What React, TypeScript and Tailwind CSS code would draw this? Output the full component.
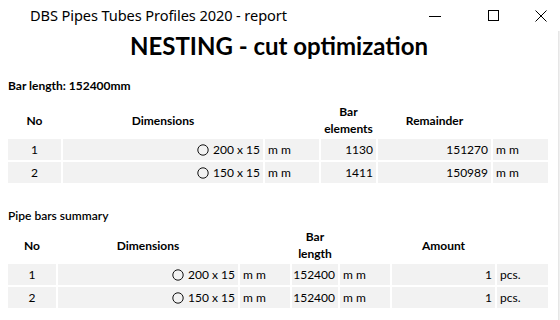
import React from "react";

const cell = "bg-[#f2f2f2] h-[21px] flex items-center px-[3px] text-[12px] text-black";
const head = "h-[34px] flex items-center justify-center text-center text-[12px] font-bold leading-[17px] text-black";

function Ring() {
  return (
    <svg width="12" height="12" viewBox="0 0 12 12" className="mr-[4px] shrink-0">
      <circle cx="6" cy="6" r="5.2" fill="none" stroke="#111" strokeWidth="1" />
    </svg>
  );
}

const nesting = [
  { no: 1, dim: "200 x 15", el: 1130, rem: 151270 },
  { no: 2, dim: "150 x 15", el: 1411, rem: 150989 },
];

const summary = [
  { no: 1, dim: "200 x 15", len: 152400, amount: 1 },
  { no: 2, dim: "150 x 15", len: 152400, amount: 1 },
];

export default function App() {
  return (
    <div className="w-[560px] h-[320px] bg-white flex overflow-hidden" style={{ fontFamily: "Lato, 'Noto Sans', sans-serif" }}>
      <div className="flex-1 flex flex-col">
        {/* title bar */}
        <div className="h-[31px] flex items-center shrink-0">
          <span className="pl-[30px] text-[14.6px] text-black tracking-[-0.1px]" style={{ fontFamily: "'Noto Sans', sans-serif" }}>
            DBS Pipes Tubes Profiles 2020 - report
          </span>
          <div className="ml-auto flex items-center">
            <div className="w-[58px] flex justify-center">
              <div className="w-[12px] h-px bg-black mt-[1px]" />
            </div>
            <div className="w-[58px] flex justify-center">
              <div className="w-[11px] h-[11px] border border-black" />
            </div>
            <div className="w-[38px] flex justify-center">
              <svg width="12" height="12" viewBox="0 0 12 12">
                <path d="M0.5 0.5 L11.5 11.5 M11.5 0.5 L0.5 11.5" stroke="#000" strokeWidth="1" />
              </svg>
            </div>
          </div>
        </div>

        <div className="flex-1 flex">
          <div className="flex-1 px-2">
            <h1 className="text-center text-[24px] font-bold leading-[30px] text-black">NESTING - cut optimization</h1>

            <div className="mt-[17px] text-[12px] font-bold leading-[16px] text-black">Bar length: 152400mm</div>

            <div className="mt-[9px] grid grid-cols-[53px_200px_54px_55px_113px_55px] gap-[2px]">
              <div className={head}>No</div>
              <div className={head}>Dimensions</div>
              <div className={head} />
              <div className={head}>Bar<br />elements</div>
              <div className={head}>Remainder</div>
              <div className={head} />
              {nesting.map((r) => (
                <React.Fragment key={r.no}>
                  <div className={`${cell} justify-center`}>{r.no}</div>
                  <div className={`${cell} justify-end`}><Ring />{r.dim}</div>
                  <div className={cell}>m m</div>
                  <div className={`${cell} justify-end`}>{r.el}</div>
                  <div className={`${cell} justify-end`}>{r.rem}</div>
                  <div className={cell}>m m</div>
                </React.Fragment>
              ))}
            </div>

            <div className="mt-[25px] text-[12px] font-semibold leading-[16px] text-black">Pipe bars summary</div>

            <div className="mt-[4px] grid grid-cols-[48px_180px_50px_46px_50px_103px_51px] gap-[2px]">
              <div className={head}>No</div>
              <div className={head}>Dimensions</div>
              <div className={head} />
              <div className={head}>Bar<br />length</div>
              <div className={head} />
              <div className={head}>Amount</div>
              <div className={head} />
              {summary.map((r) => (
                <React.Fragment key={r.no}>
                  <div className={`${cell} justify-center`}>{r.no}</div>
                  <div className={`${cell} justify-end`}><Ring />{r.dim}</div>
                  <div className={cell}>m m</div>
                  <div className={`${cell} justify-end`}>{r.len}</div>
                  <div className={cell}>m m</div>
                  <div className={`${cell} justify-end`}>{r.amount}</div>
                  <div className={cell}>pcs.</div>
                </React.Fragment>
              ))}
            </div>
          </div>
          <div className="w-[2px] bg-[#f0f0f0] border-l border-[#e6e6e6] shrink-0" />
        </div>
      </div>
    </div>
  );
}
